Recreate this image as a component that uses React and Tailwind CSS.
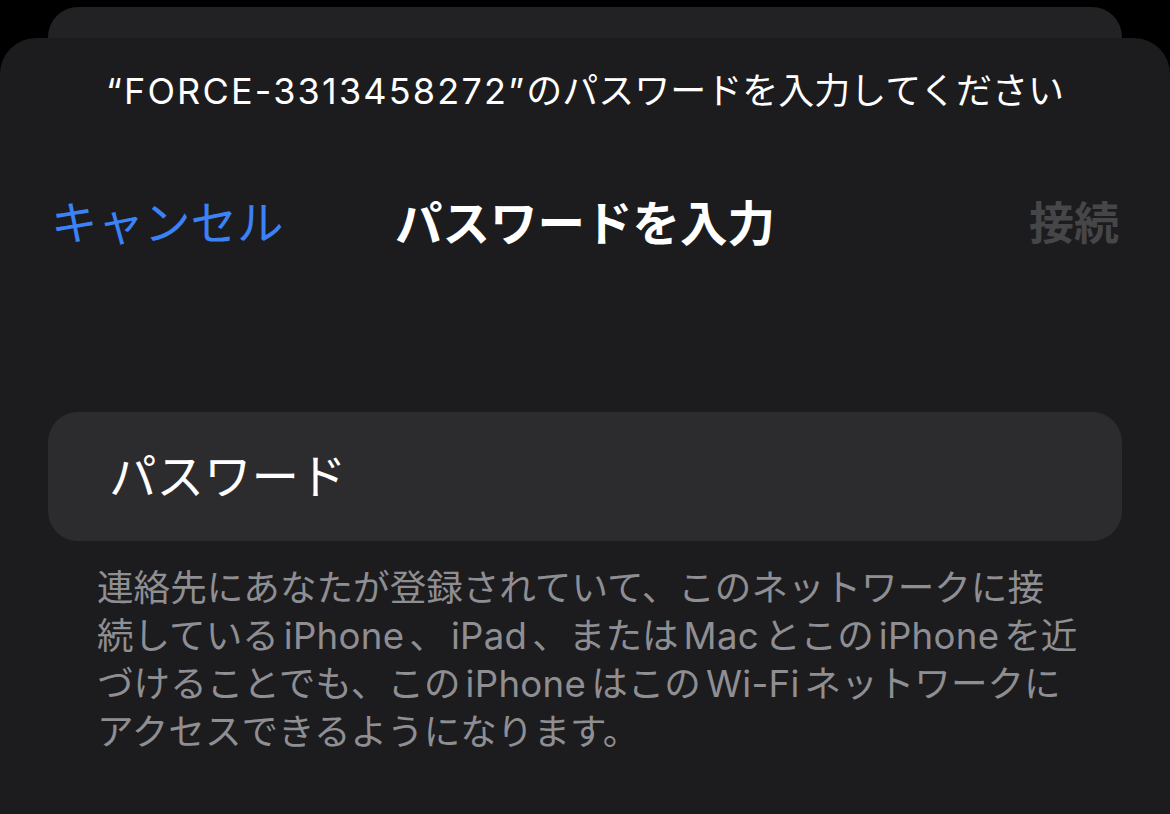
export default function App() {
  const font = { fontFamily: "Inter, 'Noto Sans CJK JP', sans-serif" }

  function Latin({ children }) {
    return <span className="mx-[5px] tracking-[0.3px]">{children}</span>
  }

  return (
    <div className="w-[1170px] h-[814px] overflow-hidden bg-black" style={font}>
      <div className="mx-[48px] mt-[7px] h-[31px] rounded-t-[30px] bg-[#222224]" />

      <div className="h-[776px] rounded-t-[36px] bg-[#1c1c1e] pt-[33px]">
        <p className="text-center text-[36px] leading-[40px] text-white">
          <span className="tracking-[2.2px]">“FORCE-3313458272”</span>のパスワードを入力してください
        </p>

        <div className="mt-[77px] grid h-[60px] grid-cols-[1fr_auto_1fr] items-center px-[51px]">
          <button className="justify-self-start text-[46.5px] text-[#3b82f6]">キャンセル</button>
          <h1 className="text-[47.5px] font-bold text-white">パスワードを入力</h1>
          <button className="justify-self-end text-[45px] font-bold text-[#464648]">接続</button>
        </div>

        <div className="mx-[48px] mt-[164px] flex h-[129px] items-center rounded-[30px] bg-[#2c2c2e] px-[61px]">
          <span className="text-[47.5px] text-white">パスワード</span>
        </div>

        <div className="mt-[23px] px-[97px] text-[36.6px] leading-[48px] text-[#8e8e93] whitespace-nowrap">
          <div>連絡先にあなたが登録されていて、このネットワークに接</div>
          <div>
            続している<Latin>iPhone</Latin>、<Latin>iPad</Latin>、または<Latin>Mac</Latin>とこの<Latin>iPhone</Latin>を近
          </div>
          <div>
            づけることでも、この<Latin>iPhone</Latin>はこの<Latin>Wi-Fi</Latin>ネットワークに
          </div>
          <div>アクセスできるようになります。</div>
        </div>
      </div>
    </div>
  )
}
